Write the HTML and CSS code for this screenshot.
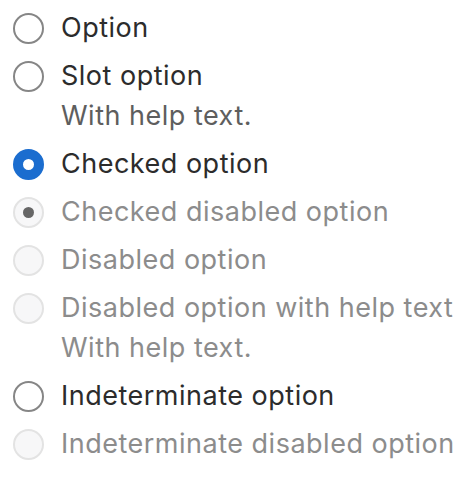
FILE: index.html
```html
<!DOCTYPE html>
<html>
<head>
<meta charset="utf-8">
<link rel="stylesheet" href="styles.css">
</head>
<body>
<div class="group">
  <label class="radio">
    <span class="control"></span>
    <span class="body"><span class="label">Option</span></span>
  </label>
  <label class="radio">
    <span class="control"></span>
    <span class="body"><span class="label">Slot option</span><span class="help">With help text.</span></span>
  </label>
  <label class="radio checked">
    <span class="control"></span>
    <span class="body"><span class="label">Checked option</span></span>
  </label>
  <label class="radio checked disabled">
    <span class="control"></span>
    <span class="body"><span class="label">Checked disabled option</span></span>
  </label>
  <label class="radio disabled">
    <span class="control"></span>
    <span class="body"><span class="label">Disabled option</span></span>
  </label>
  <label class="radio disabled">
    <span class="control"></span>
    <span class="body"><span class="label">Disabled option with help text</span><span class="help">With help text.</span></span>
  </label>
  <label class="radio">
    <span class="control"></span>
    <span class="body"><span class="label">Indeterminate option</span></span>
  </label>
  <label class="radio disabled">
    <span class="control"></span>
    <span class="body"><span class="label">Indeterminate disabled option</span></span>
  </label>
</div>
</body>
</html>
```

FILE: styles.css
```css
body {
  margin: 8px;
  background: #ffffff;
  font-family: "Inter", "Liberation Sans", sans-serif;
}

.group {
  display: flex;
  flex-direction: column;
  gap: 8px;
}

.radio {
  display: flex;
  align-items: flex-start;
  gap: 17px;
  padding-left: 5px;
}

.control {
  flex: none;
  box-sizing: border-box;
  width: 31px;
  height: 31px;
  margin-top: 4.5px;
  border-radius: 50%;
  border: 2px solid #868686;
  background: #ffffff;
  position: relative;
}

.body {
  display: flex;
  flex-direction: column;
}

.label,
.help {
  font-size: 27px;
  line-height: 40px;
  letter-spacing: 0.5px;
}

.label {
  color: #2c2c2c;
}

.help {
  color: #5e5e5e;
}

.checked .control {
  border: 10px solid #1b6dcf;
  background: #ffffff;
}

.disabled .control {
  border: 2px solid #e3e3e3;
  background: #f7f7f8;
}

.disabled .label,
.disabled .help {
  color: #8c8c8c;
}

.checked.disabled .control {
  border: 2px solid #e3e3e3;
  background: #f7f7f8;
}

.checked.disabled .control::after {
  content: "";
  position: absolute;
  left: 50%;
  top: 50%;
  width: 11px;
  height: 11px;
  margin: -5.5px 0 0 -5.5px;
  border-radius: 50%;
  background: #666666;
}
```
